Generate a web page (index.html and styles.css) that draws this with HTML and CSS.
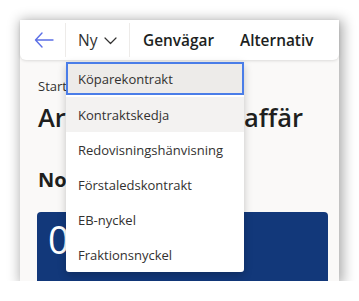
FILE: index.html
```html
<!DOCTYPE html>
<html lang="sv">
<head>
<meta charset="utf-8">
<link rel="stylesheet" href="styles.css">
</head>
<body>
<div class="frame">
  <div class="cmdbar">
    <button class="back" aria-label="Tillbaka">
      <svg width="20" height="16" viewBox="0 0 20 16"><path d="M8 1 L1.5 8 L8 15 M1.5 8 H19" fill="none" stroke="#5b6fe6" stroke-width="1.4" stroke-linecap="round" stroke-linejoin="round"/></svg>
    </button>
    <div class="sep"></div>
    <div class="newwrap">
      <button class="cmd new">Ny
        <svg width="13" height="8" viewBox="0 0 13 8"><path d="M1 1 L6.5 6.5 L12 1" fill="none" stroke="#323130" stroke-width="1.2" stroke-linecap="round" stroke-linejoin="round"/></svg>
      </button>
      <ul class="menu">
        <li class="item focused">Köparekontrakt</li>
        <li class="item hover">Kontraktskedja</li>
        <li class="item">Redovisningshänvisning</li>
        <li class="item">Förstaledskontrakt</li>
        <li class="item">EB-nyckel</li>
        <li class="item">Fraktionsnyckel</li>
      </ul>
    </div>
    <div class="sep"></div>
    <button class="cmd bold">Genvägar</button>
    <button class="cmd bold">Alternativ</button>
  </div>
  <div class="content">
    <div class="crumb">Startsida</div>
    <h1 class="title">Arbetsyta för en affär</h1>
    <h2 class="section">Noteringar</h2>
    <div class="tile"><span class="num">0</span></div>
  </div>
</div>
</body>
</html>
```
FILE: styles.css
```css
* { box-sizing: border-box; }
html, body { margin: 0; padding: 0; background: #ffffff; }
body { font-family: "Open Sans", "Noto Sans", sans-serif; color: #323130; }
.frame {
  margin: 20px 0 0 20px;
  width: 319px;
  height: 261px;
  background: #faf9f8;
  box-shadow: 2px 2px 12px 2px rgba(0,0,0,0.33);
  position: relative;
}
.cmdbar {
  height: 40px;
  background: #ffffff;
  display: flex;
  align-items: center;
  border-radius: 0 0 6px 6px;
  box-shadow: 0 1px 3px rgba(0,0,0,0.12);
  position: relative;
  z-index: 2;
}
button { font: inherit; background: none; border: 0; padding: 0; color: inherit; cursor: pointer; }
.back { width: 45px; height: 40px; display: flex; align-items: center; justify-content: center; padding-left: 2px; }
.sep { width: 1px; height: 34px; background: #edebe9; }
.newwrap { position: relative; width: 63px; height: 40px; }
.cmd { height: 40px; display: flex; align-items: center; font-size: 15px; color: #323130; }
.new { padding-left: 12px; gap: 7px; font-size: 15.5px; }
.new svg { margin-top: 1px; }
.bold { font-weight: 600; color: #201f1e; padding-left: 13px; padding-right: 13px; font-size: 15.4px; }
.menu {
  position: absolute;
  left: 0;
  top: 42px;
  width: 178px;
  margin: 0;
  padding: 0;
  list-style: none;
  background: #ffffff;
  border-radius: 0 0 3px 3px;
  box-shadow: 0 3px 8px rgba(0,0,0,0.22);
}
.item { height: 35px; display: flex; align-items: center; padding-left: 12px; font-size: 13px; color: #323130; }
.item.focused { background: #edebe9; box-shadow: inset 0 0 0 2px #4a7de8; border-bottom: 2px solid #ffffff; padding-bottom: 0; }
.item.hover { background: #f3f2f1; }
.content { padding: 17px 0 0 18px; }
.crumb { font-size: 13px; line-height: 18px; color: #323130; }
.title { margin: 4px 0 0; font-size: 25.5px; font-weight: 600; line-height: 36px; color: #201f1e; white-space: nowrap; }
.section { margin: 32px 0 0; font-size: 20px; font-weight: 700; line-height: 26px; color: #201f1e; }
.tile {
  margin: 19px 0 0 -1px;
  width: 291px;
  height: 70px;
  background: #12387a;
  border-radius: 4px 4px 0 0;
  padding: 3px 0 0 11px;
}
.num { color: #ffffff; font-size: 38px; line-height: 48px; font-weight: 400; }
```
